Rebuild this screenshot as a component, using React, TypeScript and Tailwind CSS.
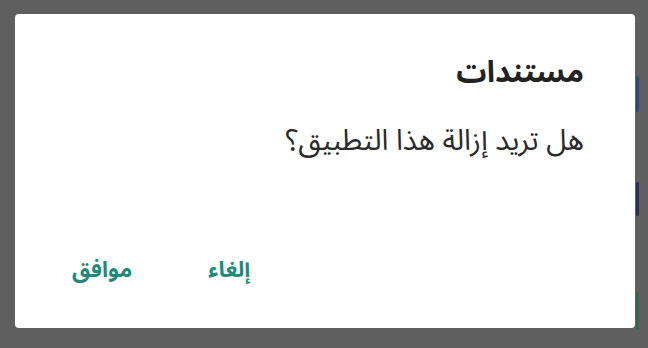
import React from 'react';

export default function App() {
  return (
    <div className="w-[648px] h-[348px] bg-[#5f5f5f] flex pt-[14px] pl-[15px]" style={{ fontFamily: '"Noto Sans Arabic", "Noto Sans Arabic UI", "Noto Naskh Arabic", "DejaVu Sans", sans-serif' }}>
      <div dir="rtl" className="w-[620px] h-[314px] bg-white rounded-[4px] flex flex-col pr-[51px] pl-[57px]">
        <h1 className="mt-[40px] text-[30px] leading-[38px] font-bold text-[#222]">مستندات</h1>
        <p className="mt-[30px] text-[29px] leading-[38px] text-[#2a2a2a]">هل تريد إزالة هذا التطبيق؟</p>
        <div className="mt-auto mb-[44px] flex justify-start gap-[76px] text-[22px] leading-[28px] font-bold text-[#1f8a78]">
          <div className="flex-1" />
          <button>إلغاء</button>
          <button>موافق</button>
        </div>
      </div>
      <div className="w-[3px] flex flex-col ml-[1px]">
        <div className="mt-[62px] h-[36px] bg-[#2d4a7a] rounded-sm" />
        <div className="mt-[70px] h-[34px] bg-[#2b2d5a] rounded-sm" />
        <div className="mt-[76px] h-[38px] bg-[#2f6a4e] rounded-sm" />
      </div>
    </div>
  );
}
